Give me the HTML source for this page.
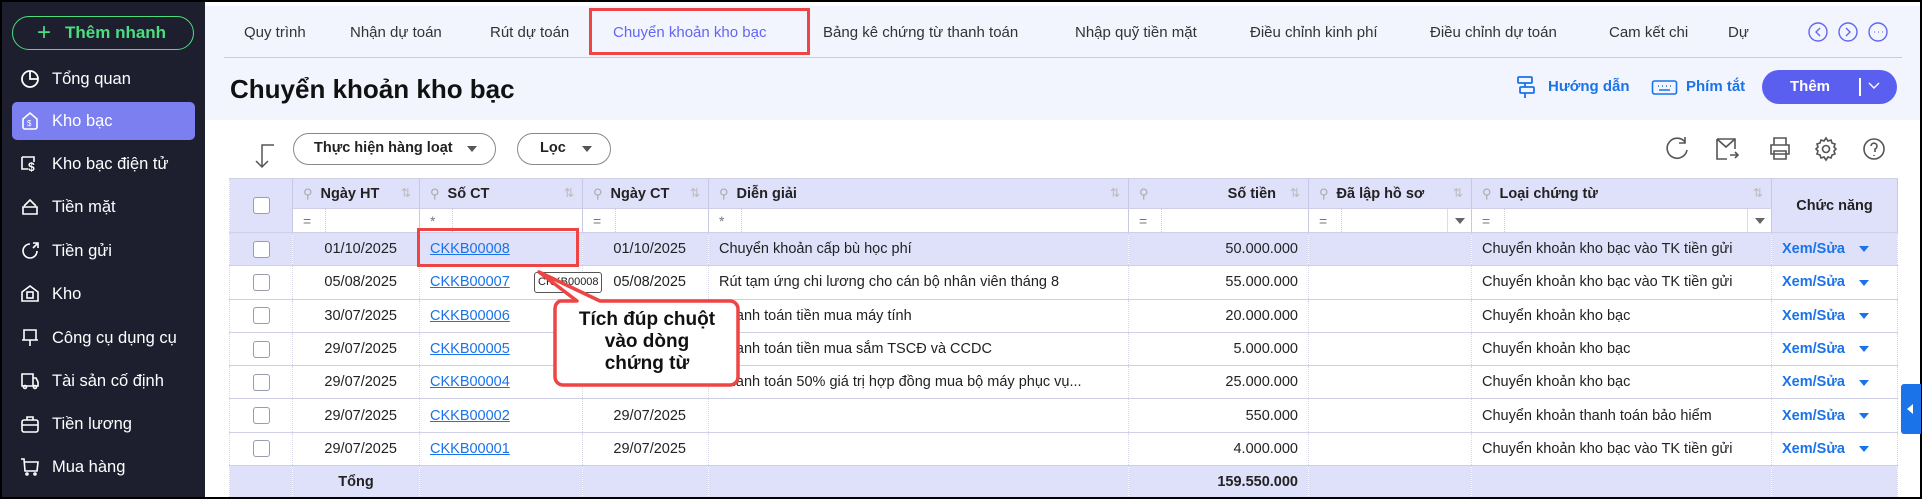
<!DOCTYPE html>
<html><head><meta charset="utf-8">
<style>
*{box-sizing:border-box;margin:0;padding:0}
body{width:1922px;height:499px;overflow:hidden;background:#000;font-family:"Liberation Sans",sans-serif;position:relative;color:#222}
.abs{position:absolute}
#side{left:2px;top:2px;width:203px;height:495px;background:#1e1f2e}
#main{left:205px;top:2px;width:1715px;height:495px;background:#fff}
#topbg{left:205px;top:6px;width:1715px;height:114px;background:#f2f5fe}
.add{left:12px;top:16px;width:182px;height:34px;border:1.5px solid #4ade80;border-radius:17px;color:#4ade80;font-size:17px;font-weight:bold;line-height:31px;padding-left:24px}
.add b{font-weight:normal;font-size:24px;margin-right:14px;vertical-align:-2px}
.nav{left:12px;width:183px;height:42px;color:#fff;font-size:16.5px;line-height:42px;padding-left:40px;border-radius:5px}
.nav svg{position:absolute;left:8px;top:11px}
.nav.act{background:#7b7fef}
.tab{top:24px;font-size:15px;color:#333;white-space:nowrap}
table{border-collapse:collapse;table-layout:fixed;position:absolute;left:229px;top:178px;width:1668px;font-size:14.5px}
td{border:1px solid #cfd0e6;border-left:1px dotted #d6d6e6;border-right:1px dotted #d6d6e6;height:33.3px;padding:0 10px;white-space:nowrap;overflow:hidden}
tr.h td{background:#dfe0fa;height:30px;font-weight:bold;font-size:14.5px;border-right:1px solid #c7c8e6;position:relative}
tr.f td{height:24px;background:#fff;border-right:1px solid #c7c8e6;color:#777;font-size:14px;position:relative}
tr.sel td{background:#dfe0fa}
tr.t td{background:#dfe0fa;font-weight:bold;height:32px}
.cb{display:inline-block;width:17px;height:17px;border:1px solid #9a9ab0;border-radius:3px;background:#fff;vertical-align:middle}
.r{text-align:right}.c{text-align:center}
a{color:#1a73e8;text-decoration:underline}
.xs{color:#1a73e8;font-weight:bold}
.tri{display:inline-block;border-left:5px solid transparent;border-right:5px solid transparent;border-top:6px solid #1a73e8;margin-left:14px;vertical-align:middle}
.pin{color:#aaa;font-weight:normal;margin-right:8px;font-size:13px}
.sort{position:absolute;right:8px;top:7px;color:#bbb;font-weight:normal;font-size:12px}
.sep{position:absolute;left:32px;top:0;bottom:0;border-left:1px dotted #ccc}
.dd{position:absolute;right:0;top:0;width:24px;height:100%;border-left:1px solid #ddd;background:#fff}
.dd:after{content:"";position:absolute;left:7px;top:9px;border-left:5px solid transparent;border-right:5px solid transparent;border-top:6px solid #666}
.btn{border:1.5px solid #888;border-radius:16px;height:32px;top:133px;font-size:14.5px;font-weight:bold;line-height:29px;padding-left:20px;background:#fff}
.btn i{position:absolute;right:18px;top:12px;border-left:5px solid transparent;border-right:5px solid transparent;border-top:6px solid #555}
</style></head><body>
<div class="abs" id="side"></div>
<div class="abs" id="main"></div>
<div class="abs" id="topbg"></div>

<div class="abs add"><b>+</b>Thêm nhanh</div>
<div class="abs nav" style="top:58px"><svg width="20" height="20" viewBox="0 0 20 20" fill="none" stroke="#fff" stroke-width="1.8"><circle cx="10" cy="10" r="8"/><path d="M10 2v8h8"/></svg>Tổng quan</div>
<div class="abs nav act" style="top:102px;height:38px;line-height:38px"><svg style="top:9px" width="20" height="20" viewBox="0 0 20 20" fill="none" stroke="#fff" stroke-width="1.6"><path d="M3 8l7-6 7 6v8a2 2 0 0 1-2 2H5a2 2 0 0 1-2-2z"/><text x="7" y="15" fill="#fff" stroke="none" font-size="8" font-family="Liberation Sans">$</text></svg>Kho bạc</div>
<div class="abs nav" style="top:143px"><svg width="22" height="20" viewBox="0 0 22 20" fill="none" stroke="#fff" stroke-width="1.6"><path d="M2 3h12v5M2 3v12h6"/><text x="8" y="17" fill="#fff" stroke="none" font-size="12" font-weight="bold" font-family="Liberation Sans">$</text></svg>Kho bạc điện tử</div>
<div class="abs nav" style="top:186px"><svg width="20" height="20" viewBox="0 0 20 20" fill="none" stroke="#fff" stroke-width="1.6"><path d="M4 9l6-6 6 6M3 10h14v7H3z"/></svg>Tiền mặt</div>
<div class="abs nav" style="top:230px"><svg width="20" height="20" viewBox="0 0 20 20" fill="none" stroke="#fff" stroke-width="1.6"><path d="M17 10a7 7 0 1 1-7-7M13 2h5v5M18 2l-5 5"/></svg>Tiền gửi</div>
<div class="abs nav" style="top:273px"><svg width="20" height="20" viewBox="0 0 20 20" fill="none" stroke="#fff" stroke-width="1.6"><path d="M2 8l8-6 8 6v9H2z"/><rect x="7" y="8" width="6" height="6"/></svg>Kho</div>
<div class="abs nav" style="top:317px"><svg width="20" height="20" viewBox="0 0 20 20" fill="none" stroke="#fff" stroke-width="1.6"><path d="M4 2h12v10H4zM2 12h16M10 12v6"/></svg>Công cụ dụng cụ</div>
<div class="abs nav" style="top:360px"><svg width="20" height="20" viewBox="0 0 20 20" fill="none" stroke="#fff" stroke-width="1.6"><path d="M2 3h11v12H2zM13 7h3l2 4v4h-5"/><circle cx="5" cy="16" r="1.5"/><circle cx="15" cy="16" r="1.5"/></svg>Tài sản cố định</div>
<div class="abs nav" style="top:403px"><svg width="20" height="20" viewBox="0 0 20 20" fill="none" stroke="#fff" stroke-width="1.6"><rect x="2" y="6" width="16" height="12" rx="2"/><path d="M7 6V3h6v3M2 11h16"/></svg>Tiền lương</div>
<div class="abs nav" style="top:446px"><svg width="20" height="20" viewBox="0 0 20 20" fill="none" stroke="#fff" stroke-width="1.6"><path d="M1 2h3l1 12h12l1-9H5"/><circle cx="7" cy="17" r="1"/><circle cx="15" cy="17" r="1"/></svg>Mua hàng</div>

<!-- tabs -->
<div class="abs tab" style="left:244px">Quy trình</div>
<div class="abs tab" style="left:350px">Nhận dự toán</div>
<div class="abs tab" style="left:490px">Rút dự toán</div>
<div class="abs tab" style="left:613px;color:#6366f1">Chuyển khoản kho bạc</div>
<div class="abs" style="left:589px;top:8px;width:221px;height:47px;border:3px solid #ef4444"></div>
<div class="abs tab" style="left:823px">Bảng kê chứng từ thanh toán</div>
<div class="abs tab" style="left:1075px">Nhập quỹ tiền mặt</div>
<div class="abs tab" style="left:1250px">Điều chỉnh kinh phí</div>
<div class="abs tab" style="left:1430px">Điều chỉnh dự toán</div>
<div class="abs tab" style="left:1609px">Cam kết chi</div>
<div class="abs tab" style="left:1728px">Dự</div>
<svg class="abs" style="left:1806px;top:21px" width="84" height="24" viewBox="0 0 84 24" fill="none" stroke="#6366f1" stroke-width="1.4"><circle cx="12" cy="11" r="9"/><path d="M14 7l-4 4 4 4"/><circle cx="42" cy="11" r="9"/><path d="M40 7l4 4-4 4"/><circle cx="72" cy="11" r="9"/><path d="M68 11h.5M72 11h.5M76 11h.5" stroke-width="2"/></svg>
<div class="abs" style="left:224px;top:57px;width:1678px;height:1px;background:#c9cbe0"></div>

<div class="abs" style="left:230px;top:74px;font-size:26px;font-weight:bold;color:#111">Chuyển khoản kho bạc</div>
<svg class="abs" style="left:1515px;top:74px" width="22" height="26" viewBox="0 0 22 26" fill="none" stroke="#1a73e8" stroke-width="1.8"><rect x="3" y="3" width="14" height="6" rx="1"/><rect x="5" y="13" width="14" height="6" rx="1"/><path d="M10 9v4M10 19v5"/></svg>
<div class="abs" style="left:1548px;top:78px;font-size:15px;font-weight:bold;color:#1a73e8">Hướng dẫn</div>
<svg class="abs" style="left:1651px;top:79px" width="27" height="18" viewBox="0 0 27 18" fill="none" stroke="#1a73e8" stroke-width="1.6"><rect x="1.5" y="2" width="24" height="13" rx="2"/><path d="M7 7h1M11 7h1M15 7h1M19 7h1M8 11h11"/></svg>
<div class="abs" style="left:1686px;top:78px;font-size:15px;font-weight:bold;color:#1a73e8">Phím tắt</div>
<div class="abs" style="left:1762px;top:70px;width:135px;height:34px;border-radius:17px;background:#5b5ff0;color:#fff;font-size:15px;font-weight:bold;line-height:34px;padding-left:28px">Thêm</div>
<div class="abs" style="left:1859px;top:78px;width:2px;height:18px;background:#fff"></div>
<svg class="abs" style="left:1868px;top:82px" width="12" height="8" viewBox="0 0 12 8" fill="none" stroke="#fff" stroke-width="1.4"><path d="M1 1l5 5 5-5"/></svg>

<!-- toolbar -->
<svg class="abs" style="left:252px;top:143px" width="24" height="26" viewBox="0 0 24 26" fill="none" stroke="#555" stroke-width="1.5"><path d="M22 2h-12v22M4 18l6 6 6-6"/></svg>
<div class="abs btn" style="left:293px;width:203px">Thực hiện hàng loạt<i></i></div>
<div class="abs btn" style="left:517px;width:94px;padding-left:22px">Lọc<i></i></div>
<svg class="abs" style="left:1660px;top:135px" width="240" height="28" viewBox="0 0 240 28" fill="none" stroke="#555" stroke-width="1.6"><path d="M25 7a10 10 0 1 0 2 8M25 2v6h-6"/><path d="M57 4h18v10M57 4v20h10M57 4l9 8 9-8M70 20h8M75 17l3 3-3 3"/><path d="M114 10V3h12v7M111 10h18v9h-18zM114 16h12v8h-12z"/><circle cx="166" cy="14" r="3.5"/><path d="M166 3l2 3 3-1 1 3 3 1-1 3 2 2-2 2 1 3-3 1-1 3-3-1-2 3-2-3-3 1-1-3-3-1 1-3-2-2 2-2-1-3 3-1 1-3 3 1z"/><circle cx="214" cy="14" r="10"/><path d="M211 11a3 3 0 1 1 4 3v3M214 20v1"/></svg>

<table>
<colgroup><col style="width:63px"><col style="width:127px"><col style="width:163px"><col style="width:126px"><col style="width:420px"><col style="width:180px"><col style="width:163px"><col style="width:300px"><col style="width:126px"></colgroup>
<tr class="h"><td rowspan="2" class="c" style="background:#dfe0fa"><span class="cb"></span></td>
<td><span class="pin">⚲</span>Ngày HT<span class="sort">⇅</span></td>
<td><span class="pin">⚲</span>Số CT<span class="sort">⇅</span></td>
<td><span class="pin">⚲</span>Ngày CT<span class="sort">⇅</span></td>
<td><span class="pin">⚲</span>Diễn giải<span class="sort">⇅</span></td>
<td class="r" style="padding-right:32px"><span class="pin" style="position:absolute;left:10px">⚲</span>Số tiền<span class="sort">⇅</span></td>
<td><span class="pin">⚲</span>Đã lập hồ sơ<span class="sort">⇅</span></td>
<td><span class="pin">⚲</span>Loại chứng từ<span class="sort">⇅</span></td>
<td rowspan="2" class="c" style="font-weight:bold;background:#dfe0fa">Chức năng</td></tr>
<tr class="f"><td>=<span class="sep"></span></td><td>*<span class="sep"></span></td><td>=<span class="sep"></span></td><td>*<span class="sep"></span></td><td>=<span class="sep"></span></td><td>=<span class="sep"></span><span class="dd"></span></td><td>=<span class="sep"></span><span class="dd"></span></td></tr>
<tr class="sel"><td class="c"><span class="cb"></span></td><td class="r" style="padding-right:22px">01/10/2025</td><td><a>CKKB00008</a></td><td class="r" style="padding-right:22px">01/10/2025</td><td>Chuyển khoản cấp bù học phí</td><td class="r">50.000.000</td><td></td><td>Chuyển khoản kho bạc vào TK tiền gửi</td><td><span class="xs">Xem/Sửa</span><span class="tri"></span></td></tr>
<tr><td class="c"><span class="cb"></span></td><td class="r" style="padding-right:22px">05/08/2025</td><td><a>CKKB00007</a></td><td class="r" style="padding-right:22px">05/08/2025</td><td>Rút tạm ứng chi lương cho cán bộ nhân viên tháng 8</td><td class="r">55.000.000</td><td></td><td>Chuyển khoản kho bạc vào TK tiền gửi</td><td><span class="xs">Xem/Sửa</span><span class="tri"></span></td></tr>
<tr><td class="c"><span class="cb"></span></td><td class="r" style="padding-right:22px">30/07/2025</td><td><a>CKKB00006</a></td><td class="r" style="padding-right:22px">30/07/2025</td><td>Thanh toán tiền mua máy tính</td><td class="r">20.000.000</td><td></td><td>Chuyển khoản kho bạc</td><td><span class="xs">Xem/Sửa</span><span class="tri"></span></td></tr>
<tr><td class="c"><span class="cb"></span></td><td class="r" style="padding-right:22px">29/07/2025</td><td><a>CKKB00005</a></td><td class="r" style="padding-right:22px">29/07/2025</td><td>Thanh toán tiền mua sắm TSCĐ và CCDC</td><td class="r">5.000.000</td><td></td><td>Chuyển khoản kho bạc</td><td><span class="xs">Xem/Sửa</span><span class="tri"></span></td></tr>
<tr><td class="c"><span class="cb"></span></td><td class="r" style="padding-right:22px">29/07/2025</td><td><a>CKKB00004</a></td><td class="r" style="padding-right:22px">29/07/2025</td><td>Thanh toán 50% giá trị hợp đồng mua bộ máy phục vụ...</td><td class="r">25.000.000</td><td></td><td>Chuyển khoản kho bạc</td><td><span class="xs">Xem/Sửa</span><span class="tri"></span></td></tr>
<tr><td class="c"><span class="cb"></span></td><td class="r" style="padding-right:22px">29/07/2025</td><td><a>CKKB00002</a></td><td class="r" style="padding-right:22px">29/07/2025</td><td></td><td class="r">550.000</td><td></td><td>Chuyển khoản thanh toán bảo hiểm</td><td><span class="xs">Xem/Sửa</span><span class="tri"></span></td></tr>
<tr><td class="c"><span class="cb"></span></td><td class="r" style="padding-right:22px">29/07/2025</td><td><a>CKKB00001</a></td><td class="r" style="padding-right:22px">29/07/2025</td><td></td><td class="r">4.000.000</td><td></td><td>Chuyển khoản kho bạc vào TK tiền gửi</td><td><span class="xs">Xem/Sửa</span><span class="tri"></span></td></tr>
<tr class="t"><td></td><td class="c">Tổng</td><td></td><td></td><td></td><td class="r">159.550.000</td><td></td><td></td><td></td></tr>
</table>

<div class="abs" style="left:417px;top:228px;width:162px;height:39px;border:3px solid #ef4444"></div>
<div class="abs" style="left:534px;top:272px;width:68px;height:21px;border:1px solid #555;border-radius:3px;background:#fff;font-size:11px;line-height:19px;padding-left:3px">CKKB00008</div>
<svg class="abs" style="left:530px;top:266px" width="220" height="125" viewBox="0 0 220 125"><path d="M9 6L47 35H30a8 8 0 0 0-5 8v68a8 8 0 0 0 8 8h167a8 8 0 0 0 8-8V43a8 8 0 0 0-8-8H70z" fill="#fff" stroke="#ef4444" stroke-width="3.5" stroke-linejoin="round"/></svg>
<div class="abs" style="left:556px;top:309px;width:182px;text-align:center;font-size:19px;font-weight:bold;line-height:22px;color:#111">Tích đúp chuột<br>vào dòng<br>chứng từ</div>

<div class="abs" style="left:1901px;top:384px;width:20px;height:50px;background:#1a73e8;border-radius:3px 0 0 3px"></div>
<div class="abs" style="left:1907px;top:404px;border-top:5px solid transparent;border-bottom:5px solid transparent;border-right:6px solid #fff"></div>
<div class="abs" style="left:0;top:497px;width:1922px;height:2px;background:#000"></div>
</body></html>
